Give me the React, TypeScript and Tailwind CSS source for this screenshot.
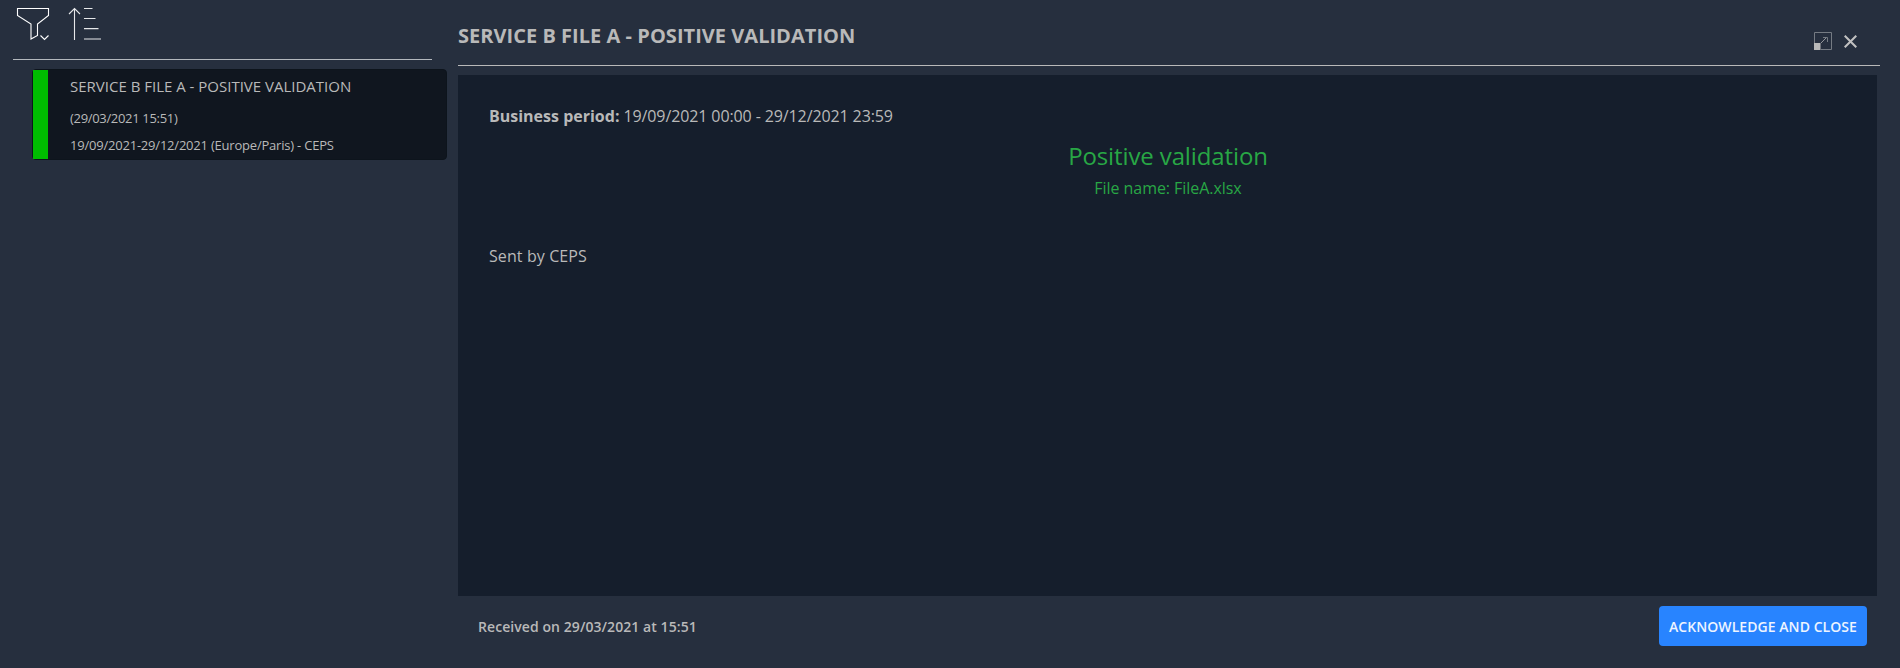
function FilterIcon() {
  return (
    <svg width="34" height="34" viewBox="0 0 34 34" fill="none">
      <path d="M1.500 1.500h31v7L21.500 17v11.500L15 32V17L1.500 8.500z" stroke="#fff" strokeWidth="1.100" />
      <path d="M24.500 28.500l4 4 4-4" stroke="#fff" strokeWidth="1.100" />
    </svg>
  );
}

function SortIcon() {
  return (
    <svg width="34" height="34" viewBox="0 0 34 34" fill="none" stroke="#e6e8ea">
      <path d="M6.500 33V1.500M1 7l5.500-5.500L12 7" strokeWidth="1.100" />
      <path d="M16 1.500h8.500M16 11.500h11.500M16 21.700h14.500M16 32h17" strokeWidth="1.200" />
    </svg>
  );
}

export default function App() {
  return (
    <div className="flex h-[668px] w-full overflow-hidden bg-[#262f3e] font-['Open_Sans',sans-serif] text-[#b9b9b9]">
      <aside className="w-[458px] shrink-0">
        <div className="ml-[13px] flex h-[60px] w-[419px] gap-[18px] border-b border-[#b3b8bd] pt-[7px] pl-[3px]">
          <FilterIcon />
          <SortIcon />
        </div>
        <article className="mt-[9px] ml-8 flex h-[91px] w-[415px] rounded border border-[#0d141c] bg-[#10161f]">
          <div className="w-[15px] bg-[#00bd00]" />
          <div className="pl-[22px]">
            <h2 className="mt-[5px] text-[15px] leading-[22px]">SERVICE B FILE A - POSITIVE VALIDATION</h2>
            <p className="mt-[11px] text-[13px] leading-[20px] tracking-[-0.32px]">(29/03/2021 15:51)</p>
            <p className="mt-[7px] text-[13px] leading-[20px] tracking-[-0.21px]">19/09/2021-29/12/2021 (Europe/Paris) - CEPS</p>
          </div>
        </article>
      </aside>
      <main className="flex flex-1 flex-col">
        <header className="mr-5 flex h-[66px] justify-between border-b border-[#b9b9b9]">
          <h1 className="mt-[22px] text-[20px] leading-[28px] font-bold tracking-[0.03px]">SERVICE B FILE A - POSITIVE VALIDATION</h1>
          <div className="mt-8 mr-[23px] flex gap-3">
            <svg width="18" height="18" viewBox="0 0 18 18" fill="none">
              <path d="M.5 11V.5h17v17H7" stroke="#757b83" />
              <path d="M0 11h6.500v7H0z" fill="#b9b9b9" />
              <path d="M7 11L13 5" stroke="#929499" />
              <path d="M9 5.500h4.500V10" stroke="#757b83" />
            </svg>
            <svg width="13" height="18" viewBox="0 0 13 18" fill="none">
              <path d="M.7 3.700l11.600 11.600M12.300 3.700L.7 15.300" stroke="#c1c1c1" strokeWidth="2.100" />
            </svg>
          </div>
        </header>
        <section className="mt-[9px] mr-[23px] h-[521px] bg-[#151e2c] px-[31px] pt-[29px] text-[16px] leading-6">
          <p className="tracking-[-0.11px]"><b className="tracking-normal">Business period:</b> 19/09/2021 00:00 - 29/12/2021 23:59</p>
          <div className="mt-[10px] text-center text-[#28a745]">
            <h3 className="pl-px text-[24px] leading-[36px] tracking-[-0.12px]">Positive validation</h3>
            <p className="mt-[2px] pl-px tracking-[-0.05px]">File name: FileA.xlsx</p>
          </div>
          <p className="mt-[44px] tracking-[0.1px]">Sent by CEPS</p>
        </section>
        <footer className="mt-[10px] mr-[33px] ml-5 flex h-10 items-center justify-between">
          <span className="text-[14px] font-semibold tracking-[0.07px]">Received on 29/03/2021 at 15:51</span>
          <button className="h-10 w-[208px] rounded-sm bg-[#2884ff] text-[14px] font-semibold tracking-[0.06px] whitespace-nowrap text-[#eef4ff]">ACKNOWLEDGE AND CLOSE</button>
        </footer>
      </main>
    </div>
  );
}
